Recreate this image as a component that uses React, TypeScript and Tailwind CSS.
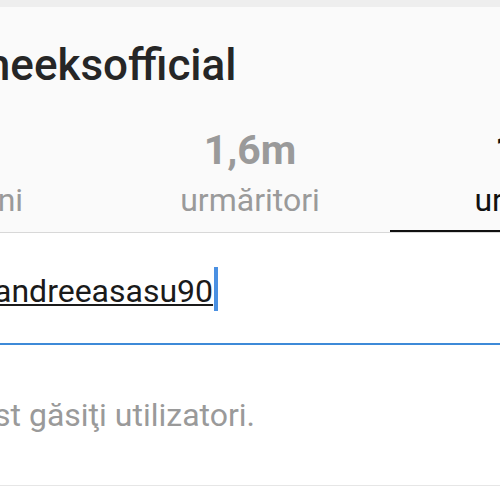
import React from "react";

export default function App() {
  return (
    <div className="w-[500px] h-[500px] overflow-hidden bg-white font-['Roboto',sans-serif]">
      <div className="h-[7px] bg-[#eeeeee]" />
      <div className="h-[226px] bg-[#fafafa] border-b border-[#d8d8d8] shadow-[0_2px_3px_rgba(0,0,0,0.06)] flex flex-col">
        <div className="mt-[32px] ml-[-28px] h-[52px] leading-[52px] text-[44px] font-medium text-[#262626] whitespace-nowrap">
          meeksofficial
        </div>
        <div className="mt-[35px] ml-[-170px] w-[840px] flex">
          <div className="w-[280px] flex flex-col items-center">
            <div className="h-[48px] leading-[48px] text-[41px] font-bold text-[#9a9a9a]">2</div>
            <div className="mt-[6px] h-[40px] leading-[40px] text-[32px] text-[#9a9a9a]">comuni</div>
          </div>
          <div className="w-[280px] flex flex-col items-center">
            <div className="h-[48px] leading-[48px] text-[41px] font-bold text-[#9a9a9a]">1,6m</div>
            <div className="mt-[6px] h-[40px] leading-[40px] text-[32px] text-[#9a9a9a]">urmăritori</div>
          </div>
          <div className="w-[280px] flex flex-col items-center">
            <div className="h-[48px] leading-[48px] text-[41px] font-bold text-[#111111]">165</div>
            <div className="mt-[6px] h-[40px] leading-[40px] text-[32px] text-[#111111]">urmăriri</div>
            <div className="mt-[10px] w-full h-[2px] bg-[#111111]" />
          </div>
        </div>
      </div>
      <div className="h-[112px] bg-white border-b-2 border-[#3d8ad8] flex flex-col">
        <div className="mt-[34px] ml-[-6px] flex items-end gap-[1px]">
          <span className="h-[40px] leading-[40px] text-[32px] text-[#1a1a1a] underline decoration-2 underline-offset-2 whitespace-nowrap">
            andreeasasu90
          </span>
          <span className="w-[4px] h-[44px] bg-[#4a90e2]" />
        </div>
      </div>
      <div className="bg-white border-b border-[#e6e6e6] pt-[51px] pb-[51px]">
        <div className="w-[255px] flex justify-end">
          <span className="shrink-0 h-[38px] leading-[38px] text-[32px] text-[#9a9a9a] whitespace-nowrap">
            Nu au fost găsiţi utilizatori.
          </span>
        </div>
      </div>
    </div>
  );
}
